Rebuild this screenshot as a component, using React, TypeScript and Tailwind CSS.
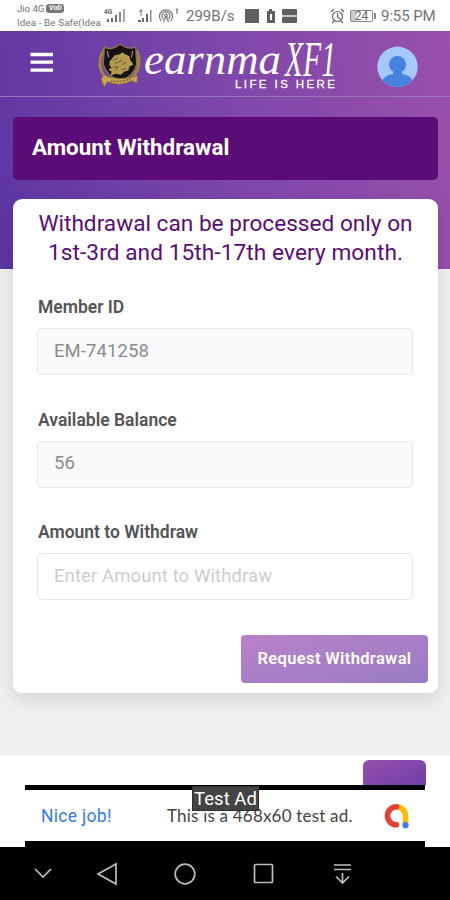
import React from "react";

function Signal({ tag }: { tag: string }) {
  return (
    <svg width="22" height="16" viewBox="0 0 22 16">
      <text x="0" y="6" fontSize="6.500" fontWeight="700" fontFamily="Roboto, sans-serif" fill="#666">{tag}</text>
      <g fill="#6c6c6c">
        <rect x="3" y="11" width="2" height="3" />
        <rect x="7" y="10" width="2" height="4" />
        <rect x="11" y="7" width="2" height="7" />
        <rect x="15" y="4" width="2" height="10" fill="#888" />
        <rect x="19" y="1" width="2" height="13" fill="#aaa" />
      </g>
    </svg>
  );
}

function StatusBar() {
  return (
    <div className="relative h-[31px] bg-white text-[#747474]">
      <div className="absolute left-[17px] top-[2px] text-[9.8px] leading-[13px] whitespace-nowrap">
        <div className="flex items-center gap-[2px] tracking-[-0.1px]">
          Jio 4G
          <span className="flex h-[9px] w-[18px] items-center justify-center rounded-[3px] bg-[#777] text-[7px] font-bold text-white">VoD</span>
        </div>
        <div className="mt-[1px] tracking-[0.12px]">Idea - Be Safe(Idea</div>
      </div>
      <div className="absolute left-[104px] top-[8px]"><Signal tag="4G" /></div>
      <svg className="absolute left-[137px] top-[8px]" width="16" height="16" viewBox="0 0 16 16">
        <path d="M4 1v7M2 4l2-2 2 2" stroke="#777" fill="none" />
        <path d="M1 12h3v2H1zM5 10h2v4H5zM9 6h2v8H9z" fill="#666" />
        <path d="M13 2h1.5v12H13z" fill="#888" />
      </svg>
      <svg className="absolute left-[158px] top-[8px]" width="22" height="16" viewBox="0 0 22 16" fill="none" stroke="#777" strokeWidth="1.2">
        <path d="M3.5 13A6.500 6.500 0 1 1 12.500 13M5.500 11a4 4 0 1 1 5 0" />
        <circle cx="8" cy="7.500" r="1.300" />
        <path d="M7.500 9l-2 5M8.500 9l2 5M18 2l1-1v5" />
      </svg>
      <span className="absolute left-[186px] top-[6px] text-[15px] leading-[20px]">299B/s</span>
      <svg className="absolute left-[244px] top-[8px]" width="54" height="16" viewBox="0 0 54 16" fill="#606060">
        <rect x="1" y="1" width="14" height="14" />
        <path d="M25 1h3v2h3v12h-8V3h2z" />
        <path d="M26 6h2v6h-2z" fill="#fff" />
        <rect x="38" y="1" width="15" height="14" rx="1" />
        <path d="M38 8h15" stroke="#ddd" strokeWidth="2" strokeDasharray="2 .5" />
      </svg>
      <svg className="absolute left-[330px] top-[8px]" width="15" height="16" viewBox="0 0 15 16" fill="none" stroke="#666" strokeWidth="1.200">
        <circle cx="7.500" cy="8.500" r="5" />
        <path d="M1 4l3-3M14 4l-3-3M7.500 5v4l3 2M4 13l-2 2M11 13l2 2" />
      </svg>
      <div className="absolute left-[350px] top-[10px] flex h-[12px] w-[23px] items-center justify-center rounded-[2px] border border-[#888] bg-linear-to-r from-[#ccc] from-25% to-white to-25% text-[12px] text-[#666]">24</div>
      <div className="absolute left-[374px] top-[13px] h-[6px] w-[2px] bg-[#888]" />
      <span className="absolute left-[381px] top-[6px] whitespace-nowrap text-[15px] leading-[20px] tracking-[-0.1px]">9:55 PM</span>
    </div>
  );
}

function Crest() {
  return (
    <svg width="46" height="47" viewBox="0 0 44 46" preserveAspectRatio="none">
      <path d="M7 7Q-1 20 6 32L12 37Q22 43 33 36Q44 24 38 8" fill="none" stroke="#a28346" strokeWidth="3" />
      <path d="M7 5Q14 9 22 2Q30 8 37 5L38 22Q35 34 22 38Q9 33 6 22Z" fill="#14130f" stroke="#8e7446" strokeWidth="1.200" />
      <path d="M10 9l1 6M34 9l-1 6" stroke="#b4a273" />
      <path d="M12 19l5-6 5-1 2-2 3 2 4 2 1 4 3 4-4 2-1 4-4 1-3 3-5-1-5 2 1-4-3-2 3-2-2-2z" fill="#b39a50" />
      <path d="M15 18l5-2M17 21l7-3M15 25l5-1-2 4M24 27l4-1M24 22l4-2" fill="none" stroke="#5b4a28" strokeWidth=".8" />
      <path d="M6 32Q21 39 39 33L38 40L33 38Q22 44 10 39L7 44L4 37Z" fill="#c8a257" stroke="#8b6b32" strokeWidth=".7" />
      <path d="M13 38Q22 40 32 36" fill="none" stroke="#7b6234" strokeWidth="1.300" strokeDasharray="2 1" />
    </svg>
  );
}

function Header() {
  return (
    <header className="relative h-[66px] border-b border-[#9b72be]">
      <svg className="absolute left-[30px] top-[21px]" width="24" height="20" viewBox="0 0 24 20" stroke="#fff" strokeWidth="3.300">
        <path d="M.5 2.500h22.500M.5 10.200h22.500M.5 18.200h22.500" />
      </svg>
      <div className="absolute left-[97px] top-[11px]"><Crest /></div>
      <svg className="absolute left-[140px] top-0 overflow-visible" width="215" height="64" viewBox="0 -3 215 64" fill="#fff">
        <text x="4" y="40" fontFamily="'Liberation Serif', serif" fontStyle="italic" fontSize="45" textLength="137" lengthAdjust="spacingAndGlyphs">earnma</text>
        <text x="145" y="42" fontFamily="'Liberation Serif', serif" fontStyle="italic" fontSize="50" textLength="51" lengthAdjust="spacingAndGlyphs">XF1</text>
        <text x="95" y="54" fontFamily="'Liberation Sans', sans-serif" fontSize="11.500" stroke="#fff" strokeWidth=".3" textLength="100">LIFE IS HERE</text>
      </svg>
      <svg className="absolute left-[377px] top-[15px]" width="41" height="42" viewBox="0 0 41 42">
        <defs><clipPath id="avatar"><circle cx="20.500" cy="20.800" r="20.200" /></clipPath></defs>
        <g clipPath="url(#avatar)">
          <rect width="41" height="42" fill="#a7c8fb" />
          <circle cx="20.500" cy="18.500" r="8.500" fill="#4682df" />
          <path d="M16 24h9v4q8 0 13 10v4H3v-4q5-10 13-10z" fill="#4682df" />
        </g>
      </svg>
    </header>
  );
}

function Field({ label, children, filled, first }: { label: string; children: React.ReactNode; filled?: boolean; first?: boolean }) {
  return (
    <div className={first ? "mt-[29px]" : "mt-[34.5px]"}>
      <div className="h-[31px] text-[17.5px] leading-[20px] font-semibold text-[#545456]">{label}</div>
      <div className={"-ml-px flex h-[47px] items-center rounded-[4px] border pl-4 text-[18.5px] " + (filled ? "border-[#e6e8ea] bg-[#f8fafc] tracking-[0.1px] text-[#8c8c8c]" : "border-[#e8e8e8] bg-white tracking-[0.1px] text-[#cdcdcf]")}>{children}</div>
    </div>
  );
}

function AdBanner() {
  return (
    <div className="relative mx-auto h-[62px] w-[400px] border-t-[5px] border-b-[6px] border-black bg-white">
      <div className="flex h-full items-center">
        <span className="ml-[16px] w-[126px] pt-[2px] text-[17.5px] tracking-[0.3px] text-[#347ce3]">Nice job!</span>
        <span className="w-[216px] whitespace-nowrap pt-px font-[Lato] text-[17px] tracking-[0.2px] text-[#444]">This is a 468x60 test ad.</span>
        <svg width="28" height="28" viewBox="0 0 28 28" fill="none" strokeWidth="5.600">
          <path d="M13.500 4.800A9 9 0 0 1 22.500 13.800V22" stroke="#fbbc04" />
          <path d="M13.500 4.800A9 9 0 0 0 13.500 22.800" stroke="#e34133" strokeLinecap="round" />
          <circle cx="22.500" cy="23.200" r="3.100" fill="#3e7de7" />
        </svg>
      </div>
      <div className="absolute left-[167px] top-[-4px] flex h-[25px] w-[67px] items-center justify-center border border-[#303030] bg-[#444] pt-[2px] text-[18.6px] whitespace-nowrap text-white">Test Ad</div>
    </div>
  );
}

function SystemNav() {
  return (
    <nav className="h-[53px] bg-black">
      <svg width="450" height="53" viewBox="0 0 450 53" fill="none" stroke="#bdbdbd" strokeWidth="1.700">
        <path d="M35 22l8 8 8-8" />
        <path d="M98 27l18-10v20z" />
        <circle cx="185" cy="27" r="9.800" />
        <rect x="254.500" y="17.500" width="18" height="18" rx="1" />
        <path d="M334 18h17M334 22.500h17M342.500 26v10M336 29.500l6.500 6.500 6.500-6.500" />
      </svg>
    </nav>
  );
}

export default function App() {
  return (
    <div className="flex h-[900px] w-[450px] flex-col overflow-hidden bg-[#f0f0f0] font-[Roboto,sans-serif]">
      <StatusBar />
      <div className="h-[238px] shrink-0 bg-[linear-gradient(80deg,#5d36a2_0%,#7b46a9_48%,#9a50ac_100%)]">
        <Header />
        <div className="mr-3 mt-[20px] ml-[13px] flex h-[63px] items-center rounded-[5px] bg-[#5b0c77] pb-[2px] pl-[19px] text-[22.4px] font-bold text-white">Amount Withdrawal</div>
      </div>
      <main className="relative mr-3 ml-[13px] -mt-[70px] h-[493.5px] shrink-0 rounded-[9px] bg-white px-[25px] pt-[10px] shadow-[0_7px_20px_rgba(0,0,0,0.12)]">
        <h2 className="-mx-4 pb-px text-center text-[22.65px] leading-[29px] font-normal whitespace-nowrap text-[#5b0c77]">Withdrawal can be processed only on<br /><span className="tracking-[0.08px]">1st-3rd and 15th-17th every month.</span></h2>
        <Field label="Member ID" filled first>EM-741258</Field>
        <Field label="Available Balance" filled>56</Field>
        <Field label="Amount to Withdraw">Enter Amount to Withdraw</Field>
        <button className="mt-[35px] -mr-[15px] ml-auto block h-[48px] w-[187px] rounded-[4px] bg-linear-to-br from-[#b982c8] to-[#987cc5] text-[16.5px] font-semibold tracking-[0.36px] whitespace-nowrap text-white">Request Withdrawal</button>
      </main>
      <footer className="mt-[63.5px] flex h-[91px] shrink-0 flex-col justify-end bg-white">
        <div className="mr-[24px] ml-auto h-[25px] w-[63px] rounded-t-[6px] bg-linear-to-br from-[#984faa] to-[#703eaa]" />
        <AdBanner />
      </footer>
      <SystemNav />
    </div>
  );
}
